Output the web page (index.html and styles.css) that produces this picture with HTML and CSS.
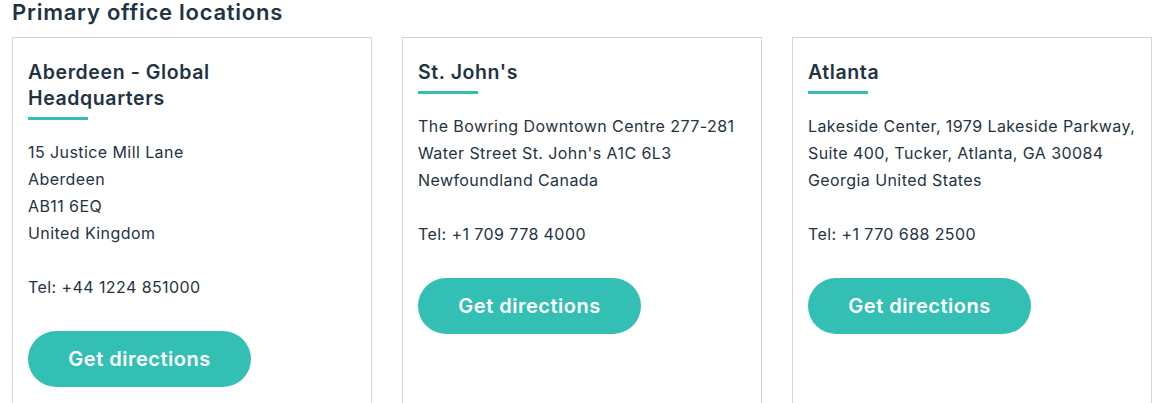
FILE: index.html
```html
<!DOCTYPE html>
<html lang="en">
<head>
<meta charset="utf-8">
<title>Primary office locations</title>
<link rel="stylesheet" href="styles.css">
</head>
<body>
<section class="offices">
  <h2 class="offices-title">Primary office locations</h2>
  <div class="cards">
    <article class="card">
      <h3 class="card-title">Aberdeen - Global Headquarters</h3>
      <p class="address">15 Justice Mill Lane<br>Aberdeen<br>AB11 6EQ<br>United Kingdom</p>
      <p class="tel">Tel: +44 1224 851000</p>
      <a class="btn" href="#">Get directions</a>
    </article>
    <article class="card">
      <h3 class="card-title">St. John's</h3>
      <p class="address">The Bowring Downtown Centre 277-281<br>Water Street St. John's A1C 6L3<br>Newfoundland Canada</p>
      <p class="tel">Tel: +1 709 778 4000</p>
      <a class="btn" href="#">Get directions</a>
    </article>
    <article class="card">
      <h3 class="card-title">Atlanta</h3>
      <p class="address">Lakeside Center, 1979 Lakeside Parkway,<br>Suite 400, Tucker, Atlanta, GA 30084<br>Georgia United States</p>
      <p class="tel">Tel: +1 770 688 2500</p>
      <a class="btn" href="#">Get directions</a>
    </article>
  </div>
</section>
</body>
</html>
```
FILE: styles.css
```css
html, body {
  margin: 0;
  padding: 0;
  background: #ffffff;
}

body {
  font-family: Inter, "Open Sans", "DejaVu Sans", sans-serif;
  color: #1f3344;
  overflow: hidden;
}

.offices {
  padding-left: 12px;
}

.offices-title {
  margin: 0 0 13px;
  font-size: 22px;
  line-height: 24px;
  font-weight: 600;
  letter-spacing: 0.75px;
  color: #1f3344;
}

.cards {
  display: grid;
  grid-template-columns: repeat(3, 360px);
  column-gap: 30px;
}

.card {
  border: 1px solid #d4d4d4;
  padding: 20.5px 15px 40px;
  min-height: 400px;
}

.card-title {
  margin: 0;
  font-size: 19.5px;
  line-height: 26px;
  font-weight: 600;
  letter-spacing: 0.6px;
  width: 240px;
}

.card-title::after {
  content: "";
  display: block;
  width: 60px;
  height: 3px;
  margin-top: 6px;
  background: #34bfb5;
}

.address,
.tel {
  margin: 0;
  font-size: 16px;
  line-height: 27px;
  letter-spacing: 0.42px;
  white-space: nowrap;
}

.address {
  margin-top: 19.5px;
}

.tel {
  margin-top: 27px;
}

.btn {
  display: inline-block;
  margin-top: 30px;
  width: 223px;
  height: 56px;
  line-height: 56px;
  border-radius: 28px;
  background: #34bfb5;
  color: #ffffff;
  font-size: 20px;
  font-weight: 600;
  letter-spacing: 0.5px;
  text-align: center;
  text-decoration: none;
}
```
